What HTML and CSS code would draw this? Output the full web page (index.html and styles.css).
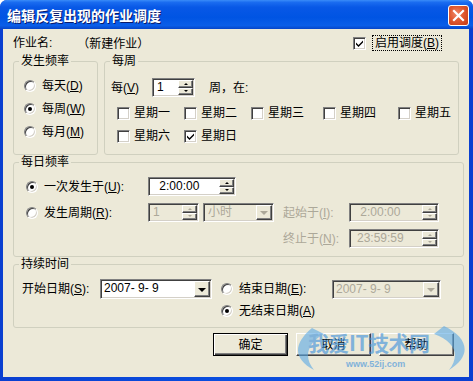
FILE: index.html
```html
<!DOCTYPE html>
<html lang="zh-CN">
<head>
<meta charset="utf-8">
<title>编辑反复出现的作业调度</title>
<link rel="stylesheet" href="styles.css">
</head>
<body>
<div class="window">
  <div class="titlebar">
    <span class="title">编辑反复出现的作业调度</span>
    <span class="close"><svg width="21" height="21" viewBox="0 0 21 21"><path d="M6 6 L15 15 M15 6 L6 15" stroke="#fff" stroke-width="2.2" stroke-linecap="square"/></svg></span>
  </div>
  <div class="client">
    <div class="toprow">
      <span>作业名:</span>
      <span class="jobname">（新建作业）</span>
      <span class="cb checked enable-cb"><svg width="9" height="9" viewBox="0 0 9 9"><path d="M1 3.5 L3.5 6 L8 1.5 L8 3.5 L3.5 8 L1 5.5 Z" fill="#000"/></svg></span>
      <span class="focus">启用调度(<u>B</u>)</span>
    </div>

    <div class="grouprow">
      <fieldset class="grp g-freq">
        <legend>发生频率</legend>
        <div class="freq-opts">
          <div class="opt"><span class="rb"></span><span>每天(<u>D</u>)</span></div>
          <div class="opt"><span class="rb on"></span><span>每周(<u>W</u>)</span></div>
          <div class="opt"><span class="rb"></span><span>每月(<u>M</u>)</span></div>
        </div>
      </fieldset>
      <fieldset class="grp g-week">
        <legend>每周</legend>
        <div class="week-inner">
          <div class="every-row">
            <span class="every-lbl">每(<u>V</u>)</span>
            <span class="spin w43"><span class="val">1</span><span class="sbtns"><span class="sb up"></span><span class="sb dn"></span></span></span>
            <span class="on-lbl">周，在:</span>
          </div>
          <div class="days">
            <div class="opt"><span class="cb"></span><span>星期一</span></div>
            <div class="opt"><span class="cb"></span><span>星期二</span></div>
            <div class="opt"><span class="cb"></span><span>星期三</span></div>
            <div class="opt"><span class="cb"></span><span>星期四</span></div>
            <div class="opt"><span class="cb"></span><span>星期五</span></div>
            <div class="opt"><span class="cb"></span><span>星期六</span></div>
            <div class="opt"><span class="cb checked"><svg width="9" height="9" viewBox="0 0 9 9"><path d="M1 3.5 L3.5 6 L8 1.5 L8 3.5 L3.5 8 L1 5.5 Z" fill="#000"/></svg></span><span>星期日</span></div>
          </div>
        </div>
      </fieldset>
    </div>

    <fieldset class="grp g-daily">
      <legend>每日频率</legend>
      <div class="daily-grid">
        <div class="opt"><span class="rb on"></span><span>一次发生于(<u>U</u>):</span></div>
        <div class="cell"><span class="spin w88"><span class="val time"> 2:00:00</span><span class="sbtns"><span class="sb up"></span><span class="sb dn"></span></span></span></div>
        <div></div>
        <div></div>

        <div class="opt"><span class="rb"></span><span>发生周期(<u>R</u>):</span></div>
        <div class="cell">
          <span class="spin w51 dis"><span class="val">1</span><span class="sbtns"><span class="sb up"></span><span class="sb dn"></span></span></span>
          <span class="combo w71 dis"><span class="val">小时</span><span class="dd"></span></span>
        </div>
        <div class="glbl dis-t">起始于(<u>I</u>):</div>
        <div class="cell"><span class="spin w90 dis"><span class="val time"> 2:00:00</span><span class="sbtns"><span class="sb up"></span><span class="sb dn"></span></span></span></div>

        <div></div>
        <div></div>
        <div class="glbl dis-t">终止于(<u>N</u>):</div>
        <div class="cell"><span class="spin w90 dis"><span class="val time">23:59:59</span><span class="sbtns"><span class="sb up"></span><span class="sb dn"></span></span></span></div>
      </div>
    </fieldset>

    <fieldset class="grp g-dur">
      <legend>持续时间</legend>
      <div class="dur-grid">
        <div class="glbl">开始日期(<u>S</u>):</div>
        <div class="cell"><span class="combo w112 h20"><span class="val date">2007- 9- 9</span><span class="dd"></span></span></div>
        <div class="opt"><span class="rb"></span><span>结束日期(<u>E</u>):</span></div>
        <div class="cell"><span class="combo w109 dis"><span class="val date">2007- 9- 9</span><span class="dd"></span></span></div>

        <div></div>
        <div></div>
        <div class="opt"><span class="rb on"></span><span>无结束日期(<u>A</u>)</span></div>
        <div></div>
      </div>
    </fieldset>

    <div class="buttons">
      <span class="btn default">确定</span>
      <span class="btn">取消</span>
      <span class="btn">帮助</span>
    </div>
  </div>

  <div class="watermark">
    <svg class="wings" width="190" height="60" viewBox="0 0 190 60">
      <path d="M28 10 C 10 25, 8 40, 30 52 C 20 40, 22 26, 40 16 Z" fill="#5aa9e6"/>
      <path d="M160 8 C 185 20, 188 38, 165 52 C 176 38, 172 24, 150 16 Z" fill="#5aa9e6"/>
    </svg>
    <span class="wm-big">我爱IT技术网</span>
    <span class="wm-small">www.52ij.com</span>
  </div>
</div>
</body>
</html>
```

FILE: styles.css
```css
* { box-sizing: border-box; }
html, body { margin: 0; padding: 0; }
body {
  width: 473px;
  height: 381px;
  overflow: hidden;
  background: #fff;
  font-family: "Liberation Sans", "Noto Sans CJK SC", sans-serif;
  font-size: 12px;
  line-height: 14px;
  color: #000;
}
u { text-decoration: underline; text-underline-offset: 1px; }

.window {
  position: relative;
  width: 473px;
  height: 381px;
  display: flex;
  flex-direction: column;
  background: linear-gradient(to right, #0a3fd0, #0a4fe0 50%, #0a3fd0);
  border-radius: 7px 7px 0 0;
  overflow: hidden;
}

.titlebar {
  height: 29px;
  flex: none;
  display: flex;
  align-items: center;
  padding: 0 4px 0 7px;
  background: linear-gradient(to bottom, #3a8cf8 0%, #1a6cf0 8%, #0858e6 25%, #0054e3 60%, #0a5ee8 88%, #0645c8 100%);
}
.title {
  flex: 1;
  color: #fff;
  font-family: "Noto Sans CJK SC", sans-serif;
  font-weight: bold;
  font-size: 14px;
  line-height: 16px;
  text-shadow: 1px 1px #0a1a6a;
}
.close {
  width: 21px;
  height: 21px;
  margin-top: 1px;
  border: 1px solid #fff;
  border-radius: 3px;
  background: radial-gradient(circle at 40% 40%, #f08a6a 0%, #e0582f 45%, #c43a14 100%);
  display: flex;
  align-items: center;
  justify-content: center;
}
.close svg { display: block; margin: -1px; }

.client {
  flex: 1;
  margin: 0 4px 4px 3px;
  background: #ece9d8;
  padding: 7px 10px 0 10px;
}

/* top row */
.toprow {
  display: flex;
  align-items: center;
  height: 14px;
}
.jobname { margin-left: 25px; font-family: "Noto Sans CJK SC", sans-serif; }
.enable-cb { margin-left: auto; }
.focus {
  margin-left: 3px;
  margin-right: 18px;
  padding: 0 2px;
  outline: 1px dotted #000;
  outline-offset: 0;
  line-height: 14px;
}

/* groups */
.grouprow { display: flex; gap: 6px; margin-top: 4px; }
fieldset.grp {
  margin: 0;
  padding: 0;
  border: 1px solid #d0d0bf;
  border-radius: 3px;
  min-width: 0;
}
fieldset.grp legend {
  padding: 0 2px;
  margin-left: 5px;
  line-height: 14px;
}
.g-freq { width: 86px; height: 101px; }
.g-week { width: 359px; height: 101px; }
.g-week legend { margin-left: 4px; }
.g-daily { width: 451px; height: 102px; margin-top: 4px; }
.g-dur { width: 451px; height: 71px; margin-top: 4px; }

.opt { display: flex; align-items: center; height: 14px; white-space: nowrap; }

/* radio */
.rb {
  flex: none;
  width: 12px;
  height: 12px;
  margin-right: 6px;
  border-radius: 50%;
  background: #fff;
  border: 1px solid;
  border-color: #808080 #fff #fff #808080;
  box-shadow: inset 1px 1px #404040, inset -1px -1px #d4d0c8;
  display: flex;
  align-items: center;
  justify-content: center;
}
.rb.on::after {
  content: "";
  width: 4px;
  height: 4px;
  border-radius: 50%;
  background: #000;
}

/* checkbox */
.cb {
  flex: none;
  width: 13px;
  height: 13px;
  margin-right: 4px;
  background: #fff;
  border: 1px solid;
  border-color: #808080 #fff #fff #808080;
  box-shadow: inset 1px 1px #404040, inset -1px -1px #d4d0c8;
  display: flex;
  align-items: center;
  justify-content: center;
}
.cb svg { display: block; }

/* frequency */
.freq-opts {
  display: flex;
  flex-direction: column;
  gap: 9px;
  padding: 11px 0 0 10px;
}

/* weekly */
.week-inner { padding: 10px 0 0 6px; }
.every-row { display: flex; align-items: center; height: 19px; }
.every-lbl { width: 41px; }
.on-lbl { margin-left: 14px; }
.days {
  display: grid;
  grid-template-columns: 67px 67px 72px 75px auto;
  grid-auto-rows: 14px;
  row-gap: 9px;
  margin-top: 9px;
  padding-left: 6px;
}

/* spin / combo */
.spin, .combo {
  display: flex;
  height: 19px;
  background: #fff;
  border: 1px solid;
  border-color: #808080 #fff #fff #808080;
  box-shadow: inset 1px 1px #404040, inset -1px -1px #d4d0c8;
  padding: 1px;
}
.w43 { width: 43px; }
.w88 { width: 88px; }
.w51 { width: 51px; }
.w71 { width: 71px; }
.w90 { width: 90px; }
.w112 { width: 112px; }
.w109 { width: 109px; }
.h20 { height: 20px; }

.val {
  flex: 1;
  padding-left: 3px;
  line-height: 15px;
  white-space: pre;
  overflow: hidden;
}
.val.time { padding-left: 6px; }
.val.date { padding-left: 2px; }
.sbtns { width: 15px; display: flex; flex-direction: column; }
.sb, .dd {
  background: #ece9d8;
  border: 1px solid;
  border-color: #fff #404040 #404040 #fff;
  box-shadow: inset -1px -1px #808080;
  display: flex;
  align-items: center;
  justify-content: center;
}
.sb { flex: 1; }
.sb::after {
  content: "";
  border-left: 2px solid transparent;
  border-right: 2px solid transparent;
}
.sb.up::after { border-bottom: 2px solid #000; }
.sb.dn::after { border-top: 2px solid #000; }
.dd { width: 16px; flex: none; }
.dd::after {
  content: "";
  border-left: 4px solid transparent;
  border-right: 4px solid transparent;
  border-top: 4px solid #000;
  margin-top: 1px;
}

.dis { background: #ece9d8; }
.dis .val { color: #aca899; }
.dis .sb.up::after { border-bottom-color: #aca899; }
.dis .sb.dn::after { border-top-color: #aca899; }
.dis .dd::after { border-top-color: #aca899; }
.dis-t { color: #aca899; }

/* daily */
.daily-grid {
  display: grid;
  grid-template-columns: 122px 135px 66px 90px;
  grid-auto-rows: 19px;
  row-gap: 7px;
  padding: 8px 0 0 12px;
  align-items: center;
}
.cell { display: flex; gap: 4px; align-items: center; }
.glbl { white-space: nowrap; }

/* duration */
.dur-grid {
  display: grid;
  grid-template-columns: 78px 121px 111px 109px;
  grid-template-rows: 20px 14px;
  row-gap: 5px;
  padding: 8px 0 0 8px;
  align-items: center;
}

/* buttons */
.buttons {
  display: flex;
  justify-content: flex-end;
  gap: 8px;
  margin: 5px 5px 0 0;
}
.btn {
  width: 75px;
  height: 23px;
  display: flex;
  align-items: center;
  justify-content: center;
  background: #ece9d8;
  border: 1px solid;
  border-color: #fff #404040 #404040 #fff;
  box-shadow: inset -1px -1px #808080;
}
.btn.default {
  border: 1px solid #000;
  box-shadow: inset 1px 1px #fff, inset -1px -1px #404040, inset -2px -2px #808080;
}

/* watermark overlay */
.watermark {
  position: absolute;
  left: 284px;
  top: 318px;
  width: 190px;
  height: 60px;
  pointer-events: none;
  opacity: 0.6;
}
.wings { position: absolute; left: 0; top: 0; }
.wm-big {
  position: absolute;
  left: 24px;
  top: 11px;
  font-family: "Noto Sans CJK SC", sans-serif;
  font-weight: bold;
  font-size: 21px;
  line-height: 26px;
  color: #3a8fdc;
  letter-spacing: -0.5px;
}
.wm-small {
  position: absolute;
  left: 62px;
  top: 41px;
  font-family: "Liberation Sans", sans-serif;
  font-weight: bold;
  font-size: 9px;
  line-height: 10px;
  color: #3a8fdc;
}
```
